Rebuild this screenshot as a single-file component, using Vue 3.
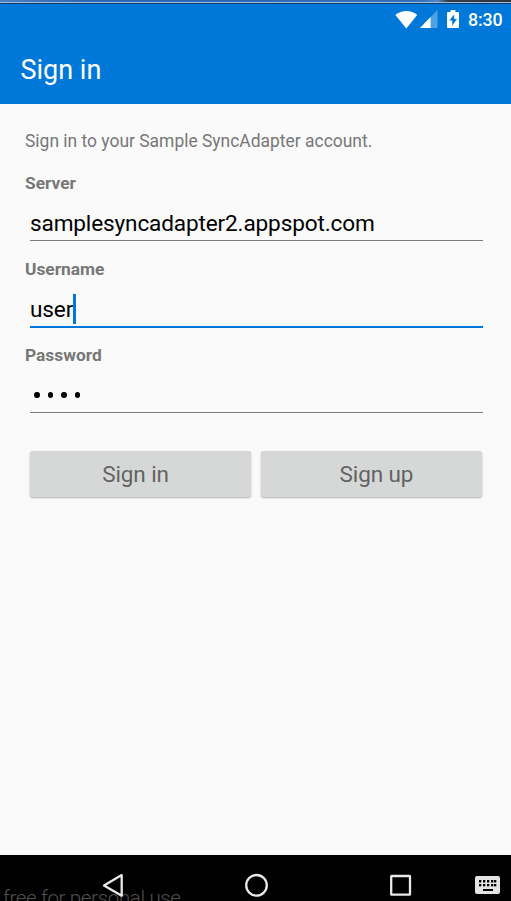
<script setup>
import { ref } from 'vue'

const intro = 'Sign in to your Sample SyncAdapter account.'
const server = ref('samplesyncadapter2.appspot.com')
const username = ref('user')
const passwordLength = ref(4)
// Rows of small keys on the keyboard glyph
const keyColumns = [4, 8, 12, 16, 19]
</script>

<template>
  <div class="screen">
    <div class="window-edge"></div>
    <header class="header">
      <div class="status">
        <svg class="wifi" width="24" height="19" viewBox="0 0 24 19">
          <path d="M0.4 5.1C7 -0.3 16 -0.3 22.2 5.1L11.3 18.4Z" fill="#fff" />
        </svg>
        <svg class="signal" width="18" height="18" viewBox="0 0 18 18">
          <path d="M0 18L17.5 0V18Z" fill="#4fa1e6" />
          <path d="M0 18L10.6 7.1V18Z" fill="#fff" />
        </svg>
        <svg class="battery" width="12" height="18" viewBox="0 0 12 18">
          <path d="M3.6 0H8.4V2H11Q12 2 12 3V17Q12 18 11 18H1Q0 18 0 17V3Q0 2 1 2H3.6Z" fill="#fff" />
          <path d="M7.2 4.4L2.3 10.6H5.2V15.8L10 8.9H7.2Z" fill="#0078d9" />
        </svg>
        <span class="clock">8:30</span>
      </div>
      <h1 class="title"><span>Sign in</span></h1>
    </header>

    <main class="content">
      <p class="intro"><span>{{ intro }}</span></p>
      <div class="field">
        <div class="label">Server</div>
        <div class="input"><span>{{ server }}</span></div>
      </div>
      <div class="field">
        <div class="label">Username</div>
        <div class="input focused"><span>{{ username }}</span><i class="caret"></i></div>
      </div>
      <div class="field">
        <div class="label">Password</div>
        <div class="input password"><i v-for="n in passwordLength" :key="n" class="dot"></i></div>
      </div>
      <div class="actions">
        <button type="button" class="sign-in"><span>Sign in</span></button>
        <button type="button" class="sign-up"><span>Sign up</span></button>
      </div>
    </main>

    <nav class="navbar">
      <span class="watermark">free for personal use</span>
      <svg class="nav-icons" width="511" height="46" viewBox="0 0 511 46">
        <g fill="none" stroke="#e9e9e9" stroke-width="2.3" stroke-linejoin="round">
          <path d="M121.7 20.1V40.7L104 30.4Z" />
          <circle cx="256.5" cy="30.3" r="10.3" />
          <rect x="391.2" y="21" width="18.8" height="18.6" rx="0.4" />
        </g>
        <g transform="translate(475 21)">
          <rect width="25" height="18" rx="2" fill="#e4e4e4" />
          <g fill="#000">
            <template v-for="x in keyColumns" :key="x">
              <rect :x="x" y="4" width="2.3" height="2.5" />
              <rect :x="x" y="8" width="2.3" height="2.3" />
            </template>
            <rect x="8" y="13" width="10" height="2" />
          </g>
        </g>
      </svg>
    </nav>
  </div>
</template>

<style>
body {
  margin: 0;
  background: #fafafa;
}
</style>

<style scoped>
.screen {
  width: 511px;
  height: 901px;
  display: flex;
  flex-direction: column;
  overflow: hidden;
  background: #fafafa;
  font-family: Roboto, "Liberation Sans", sans-serif;
}
.window-edge {
  height: 2px;
  flex: none;
  border-bottom: 1px solid #a9bdd4;
  background: linear-gradient(90deg, #4a7fc4 0, #2c68b5 85px, #2f6fbd 420px, #4f86c0 438px, #343d49 448px, #30353c 511px);
}
.header {
  height: 101px;
  box-sizing: border-box;
  flex: none;
  border-top: 1px solid #063c72;
  background: #0078d9;
  color: #fff;
}
.status {
  display: flex;
  height: 32px;
  align-items: center;
  padding-left: 395px;
}
.status svg {
  flex: none;
  position: relative;
  top: -1px;
}
.signal {
  margin-left: 1px;
}
.battery {
  margin-left: 9px;
}
.clock {
  margin-left: 9px;
  font-size: 17.8px;
  font-weight: 500;
  line-height: 32px;
  letter-spacing: -0.1px;
}
.title {
  margin: 0;
  padding: 18px 20.5px;
  font-size: 27px;
  font-weight: 400;
  line-height: 32px;
}
.content {
  flex: 1;
  padding: 27px 28px 0 25px;
}
.intro {
  margin: 0 0 22px;
  color: #777;
  font-size: 17.45px;
  line-height: 20px;
}
.field {
  height: 86px;
}
.label {
  color: #777;
  font-size: 17.35px;
  font-weight: 700;
  line-height: 20px;
}
.input {
  display: flex;
  align-items: center;
  height: 48px;
  box-sizing: border-box;
  margin-left: 5px;
  padding: 15px 0 0;
  border-bottom: 1.5px solid #7c7c7c;
  font-size: 22.6px;
  letter-spacing: -0.15px;
  line-height: 32px;
  color: #000;
}
.focused {
  height: 49px;
  border-bottom: 2px solid #0078d9;
}
.caret {
  width: 2.7px;
  height: 30px;
  margin: -3px 0 0 -0.3px;
  background: #0078d9;
}
.password {
  gap: 8px;
  padding: 13px 0 1px 4px;
}
.dot {
  width: 5.5px;
  height: 6px;
  border-radius: 50%;
  background: #000;
}
.actions {
  display: flex;
  gap: 10px;
  padding: 20px 1px 0 5px;
}
button {
  flex: 1;
  height: 46px;
  padding: 0;
  border: 0;
  border-radius: 2.5px;
  background: #d6d8d7;
  box-shadow: 0 1px 2px rgba(0, 0, 0, 0.3);
  color: #636363;
  font: 400 22.5px/46px Roboto, "Liberation Sans", sans-serif;
  letter-spacing: -0.1px;
}
.sign-in {
  padding-right: 10px;
}
.sign-up {
  padding-left: 10px;
}
.navbar {
  position: relative;
  height: 46px;
  flex: none;
  overflow: hidden;
  background: #000;
}
.watermark {
  position: absolute;
  left: 3px;
  top: 29px;
  color: #505050;
  font-size: 20.6px;
  letter-spacing: -0.38px;
  font-weight: 300;
  line-height: 28px;
  white-space: nowrap;
}
.nav-icons {
  position: relative;
  display: block;
}
</style>
